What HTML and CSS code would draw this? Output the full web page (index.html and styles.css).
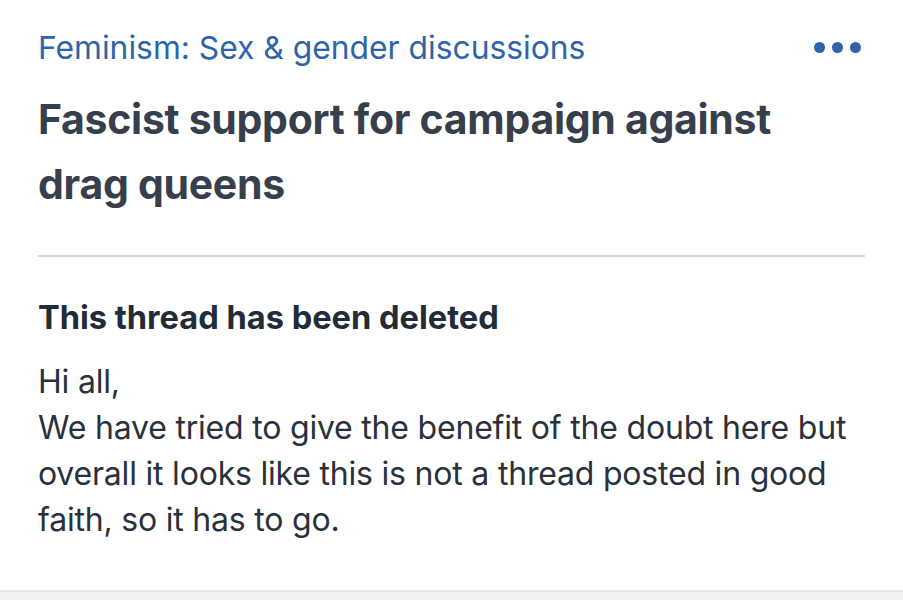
FILE: index.html
```html
<!DOCTYPE html>
<html lang="en">
<head>
<meta charset="utf-8">
<title>Thread deleted</title>
<link rel="stylesheet" href="styles.css">
</head>
<body>
<div class="page">
  <header class="head">
    <div class="topline">
      <a class="category" href="#">Feminism: Sex &amp; gender discussions</a>
      <button class="more" aria-label="More">
        <span class="dot"></span><span class="dot"></span><span class="dot"></span>
      </button>
    </div>
    <h1 class="title">Fascist support for campaign against drag queens</h1>
  </header>
  <section class="notice">
    <h2 class="notice-title">This thread has been deleted</h2>
    <p class="notice-body">Hi all,<br>We have tried to give the benefit of the doubt here but overall it looks like this is not a thread posted in good faith, so it has to go.</p>
  </section>
  <div class="footer-band"></div>
</div>
</body>
</html>
```
FILE: styles.css
```css
html, body {
  margin: 0;
  padding: 0;
  background: #ffffff;
}
body {
  font-family: "Inter", "Roboto", "Liberation Sans", sans-serif;
  -webkit-font-smoothing: antialiased;
}
.page {
  width: 903px;
  height: 600px;
  display: flex;
  flex-direction: column;
  overflow: hidden;
}
.head {
  margin: 0 38px;
  padding-top: 28px;
  padding-bottom: 38px;
  border-bottom: 2px solid #cddbe8;
}
.topline {
  display: flex;
  align-items: center;
  justify-content: space-between;
  height: 38px;
}
.category {
  color: #2d65a8;
  text-decoration: none;
  font-size: 31.8px;
  font-weight: 400;
}
.more {
  border: 0;
  background: none;
  padding: 0;
  margin-right: 4px;
  display: flex;
  gap: 7px;
}
.dot {
  width: 11px;
  height: 11px;
  border-radius: 50%;
  background: #2d65a8;
}
.title {
  margin: 21px 0 0;
  color: #373f4d;
  font-size: 41px;
  font-weight: 700;
  line-height: 65px;
  letter-spacing: -0.3px;
}
.notice {
  margin: 0 38px;
  padding-top: 40px;
  flex: 1;
}
.notice-title {
  margin: 0;
  color: #222b38;
  font-size: 32.6px;
  font-weight: 700;
  line-height: 40px;
  letter-spacing: 0;
}
.notice-body {
  margin: 22px 0 0;
  color: #2a313d;
  font-size: 32px;
  line-height: 46px;
  letter-spacing: -0.2px;
}
.footer-band {
  height: 8px;
  background: #f2f2f5;
  border-top: 2px solid #e6e6ec;
}
```
